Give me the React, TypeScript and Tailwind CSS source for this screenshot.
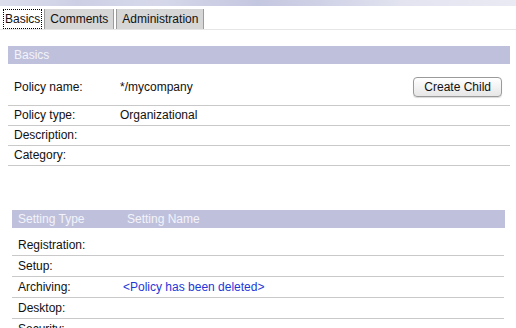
import React from "react";

const font = { fontFamily: '"Liberation Sans", Arial, sans-serif' };

function Row({ label, value }: { label: string; value?: string }) {
  return (
    <div className="flex h-[20px] items-center border-b border-[#c9c9c9] pl-[6px]">
      <div className="w-[106px] shrink-0">{label}</div>
      {value && <div>{value}</div>}
    </div>
  );
}

function Row2({ label, link }: { label: string; link?: boolean }) {
  return (
    <div className="flex h-[21px] items-center border-b border-[#c9c9c9] pl-[6px]">
      <div className="w-[105px] shrink-0">{label}</div>
      {link && <div className="text-[#2337d8]">&lt;Policy has been deleted&gt;</div>}
    </div>
  );
}

export default function App() {
  return (
    <div className="w-[516px] h-[328px] overflow-hidden bg-white text-[12px] leading-[15px] text-[#111]" style={font}>
      <div className="h-[6px] bg-[linear-gradient(90deg,#dcdeec_0%,#cdd0e5_15%,#d6d8ea_30%,#c4c7e0_50%,#cfd1e6_62%,#e3e4f0_78%,#e9eaf3_100%)]" />
      <div className="mt-[3px] flex h-[21px] items-start border-b border-[#e6e6e6] pl-[3px]">
        <div className="flex h-[20px] items-center border border-dotted border-black bg-white px-[1px]">Basics</div>
        <div className="ml-[2px] flex h-[20px] items-center border-x border-[#9c9c9c] bg-[#d6d6d6] px-[5px]">Comments</div>
        <div className="ml-[2px] flex h-[20px] items-center border-x border-[#9c9c9c] bg-[#d6d6d6] px-[5px]">Administration</div>
      </div>

      <div className="mt-[16px] ml-[8px] w-[502px]">
        <div className="flex h-[18px] items-center bg-[#bfc1dc] pl-[6px] text-[#f3f3fa]">Basics</div>
        <div className="flex items-center border-b border-[#c9c9c9] pl-[6px] pr-[8px] pt-[13px] pb-[8px]">
          <div className="w-[106px] shrink-0">Policy name:</div>
          <div className="flex-1">*/mycompany</div>
          <button className="h-[20px] rounded-[4px] border border-[#9a9a9a] bg-[linear-gradient(#ffffff,#e6e6e6)] px-[10px] text-[12px] text-[#111] shadow-[0_1px_1px_rgba(0,0,0,0.15)]">
            Create Child
          </button>
        </div>
        <Row label="Policy type:" value="Organizational" />
        <Row label="Description:" />
        <Row label="Category:" />
      </div>

      <div className="mt-[44px] ml-[12px] w-[493px]">
        <div className="flex h-[18px] items-center bg-[#bfc1dc] pl-[6px] text-[#f3f3fa]">
          <div className="w-[109px]">Setting Type</div>
          <div>Setting Name</div>
        </div>
        <div className="w-[492px]">
          <div className="flex h-[28px] items-end border-b border-[#c9c9c9] pb-[2px] pl-[6px]">Registration:</div>
          <Row2 label="Setup:" />
          <Row2 label="Archiving:" link />
          <Row2 label="Desktop:" />
          <Row2 label="Security:" />
        </div>
      </div>
    </div>
  );
}
